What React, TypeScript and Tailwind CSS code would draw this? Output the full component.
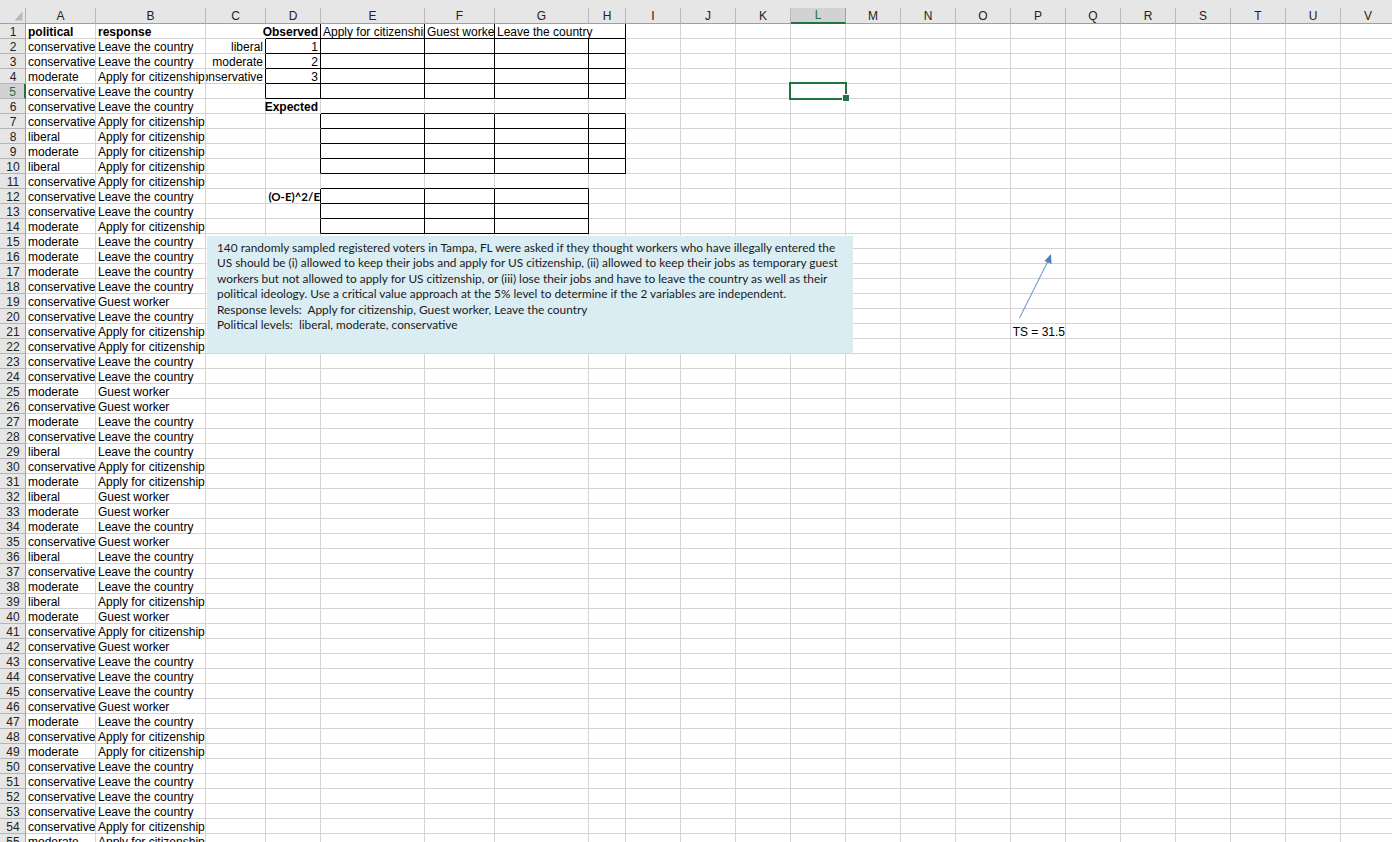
import clsx from 'clsx'

const COLS = 'ABCDEFGHIJKLMNOPQRSTUV'.split('')
const TEMPLATE = 'grid grid-cols-[26px_70px_110px_60px_55px_104px_70px_94px_37px_repeat(14,55px)]'

const POLITICAL: Record<string, string> = { c: 'conservative', m: 'moderate', l: 'liberal' }
const RESPONSE: Record<string, string> = { L: 'Leave the country', A: 'Apply for citizenship', G: 'Guest worker' }

// political + response, row 2 onwards
const DATA =
  'cL cL mA cL cL cA lA mA lA cA cL cL mA mL mL mL cL cG cL cA cA cL cL mG cG mL cL lL cA mA lG mG mL cG lL cL mL lA mG cA cG cL cL cL cG mL cA mA cL cL cL cL cA mA'.split(' ')

const between = (n: number, a: number, b: number) => n >= a && n <= b

function blackRight(col: number, row: number) {
  if (col === 2) return between(row, 2, 5)
  if (col === 3 || col === 4 || col === 5) return between(row, 1, 5) || between(row, 7, 10) || between(row, 12, 14)
  if (col === 6) return between(row, 2, 5) || between(row, 7, 10) || between(row, 12, 14)
  if (col === 7) return between(row, 1, 5) || between(row, 7, 10)
  return false
}

function blackBottom(col: number, row: number) {
  if (col === 3) return between(row, 1, 5)
  if (col >= 4 && col <= 6) return between(row, 1, 14)
  if (col === 7) return between(row, 1, 10)
  return false
}

type CellContent = { text: string; bold?: boolean; right?: boolean; clip?: boolean; calibri?: boolean; flush?: boolean }

function contentFor(col: number, row: number): CellContent | null {
  if (row === 1) {
    if (col === 0) return { text: 'political', bold: true }
    if (col === 1) return { text: 'response', bold: true }
    if (col === 3) return { text: 'Observed', bold: true, right: true }
    if (col === 4) return { text: 'Apply for citizenship', clip: true }
    if (col === 5) return { text: 'Guest worker', clip: true }
    if (col === 6) return { text: 'Leave the country' }
    return null
  }
  if (col === 0) return { text: POLITICAL[DATA[row - 2][0]] }
  if (col === 1) return { text: RESPONSE[DATA[row - 2][1]] }
  if (col === 2 && row === 2) return { text: 'liberal', right: true }
  if (col === 2 && row === 3) return { text: 'moderate', right: true }
  if (col === 2 && row === 4) return { text: 'conservative', right: true, clip: true }
  if (col === 3 && between(row, 2, 4)) return { text: String(row - 1), right: true }
  if (col === 3 && row === 6) return { text: 'Expected', bold: true, right: true }
  if (col === 3 && row === 12) return { text: '(O-E)^2/E', bold: true, right: true, calibri: true, flush: true }
  if (col === 15 && row === 21) return { text: 'TS = 31.5', right: true, flush: true }
  return null
}

function Cell({ col, row }: { col: number; row: number }) {
  const c = contentFor(col, row)
  // gridline is hidden where text runs over into the next cell
  const hideRight = row === 1 && (col === 2 || col === 6)
  return (
    <div
      className={clsx(
        'h-[15px] border-b flex items-start whitespace-nowrap pl-[2px] pt-[1px]',
        c?.flush ? 'pr-0' : 'pr-[2px]',
        blackBottom(col, row) ? 'border-b-black' : 'border-b-[#d4d4d4]',
        hideRight ? 'border-r-0' : 'border-r',
        blackRight(col, row) ? 'border-r-black' : 'border-r-[#d4d4d4]',
        c?.right && 'justify-end',
        c?.clip && 'overflow-hidden'
      )}
    >
      {c && (
        <span
          className={clsx(
            'shrink-0 leading-[14px]',
            c.bold && 'font-bold',
            c.calibri
              ? "font-['Lato',sans-serif] text-[11.5px]"
              : "font-['Liberation_Sans',Arial,sans-serif] text-[12px]"
          )}
        >
          {c.text}
        </span>
      )}
    </div>
  )
}

function Row({ row }: { row: number }) {
  const selected = row === 5
  return (
    <div className={TEMPLATE}>
      <div
        className={clsx(
          "h-[15px] flex items-start justify-center pl-[1px] pt-[1px] border-b border-b-[#b4b4b4] font-['Liberation_Sans',Arial,sans-serif] text-[12px] leading-[14px]",
          selected
            ? 'bg-[#d2d2d2] text-[#217346] border-r-2 border-r-[#217346]'
            : 'bg-[#e6e6e6] text-[#222] border-r border-r-[#9f9f9f]'
        )}
      >
        {row}
      </div>
      {COLS.map((_, i) => (
        <Cell key={i} col={i} row={row} />
      ))}
    </div>
  )
}

function HeaderRow() {
  return (
    <div className="bg-[#e6e6e6]">
      <div className="h-[8px]" />
      <div className={clsx(TEMPLATE, 'h-[16px]')}>
        <div className="relative border-b border-b-[#9f9f9f] border-r border-r-[#b4b4b4]">
          <svg className="absolute left-[14px] top-[3px]" width="9" height="10" viewBox="0 0 9 10">
            <polygon points="8.5,0.5 8.5,9.5 0.5,9.5" fill="#b9b9b9" />
          </svg>
        </div>
        {COLS.map(l => (
          <div
            key={l}
            className={clsx(
              "flex items-center justify-center font-['Liberation_Sans',Arial,sans-serif] text-[12px] leading-[14px] border-r",
              l === 'L'
                ? 'bg-[#d2d2d2] text-[#217346] border-r-[#9f9f9f] border-b-2 border-b-[#217346]'
                : 'text-[#222] border-r-[#b9b9b9] border-b border-b-[#9f9f9f]'
            )}
          >
            {l}
          </div>
        ))}
      </div>
    </div>
  )
}

const PROBLEM = [
  '140 randomly sampled registered voters in Tampa, FL were asked if they thought workers who have illegally entered the',
  'US should be (i) allowed to keep their jobs and apply for US citizenship, (ii) allowed to keep their jobs as temporary guest',
  'workers but not allowed to apply for US citizenship, or (iii) lose their jobs and have to leave the country as well as their',
  'political ideology. Use a critical value approach at the 5% level to determine if the 2 variables are independent.',
  'Response levels:  Apply for citizenship, Guest worker, Leave the country',
  'Political levels:  liberal, moderate, conservative',
]

export default function App() {
  const rows = Array.from({ length: 55 }, (_, i) => i + 1)
  return (
    <div className="relative h-[842px] w-[1392px] overflow-hidden bg-white text-black">
      <HeaderRow />
      {rows.map(r => (
        <Row key={r} row={r} />
      ))}

      {/* text box over the sheet */}
      <div className="absolute left-[207px] top-[236px] h-[117px] w-[646px] bg-[#daedf3] pl-[10px] pt-[4px] font-['Lato',sans-serif] text-[11.85px] leading-[15.4px] text-[#1a1a1a] whitespace-pre">
        {PROBLEM.map(line => (
          <div key={line}>{line}</div>
        ))}
      </div>

      {/* arrow shape */}
      <svg className="absolute left-[1010px] top-[248px]" width="50" height="75" viewBox="0 0 50 75">
        <line x1="9.5" y1="70" x2="39" y2="11" stroke="#5b87c5" strokeWidth="1" />
        <polygon points="41,6 41.5,16 34.5,13" fill="#4f7fbf" />
      </svg>

      {/* selected cell L5 */}
      <div className="absolute left-[789px] top-[82px] h-[18px] w-[58px] border-2 border-[#217346]" />
      <div className="absolute left-[843px] top-[95px] h-[6px] w-[6px] bg-[#217346] outline outline-1 outline-white" />
    </div>
  )
}
